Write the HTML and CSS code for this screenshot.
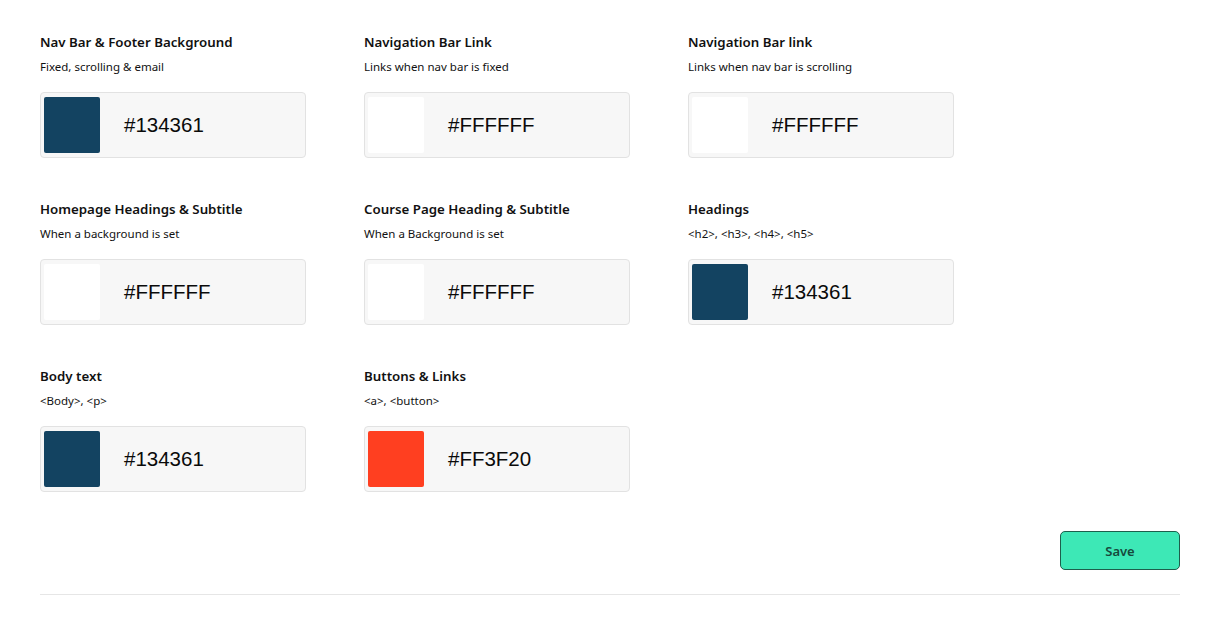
FILE: index.html
```html
<!DOCTYPE html>
<html lang="en">
<head>
  <meta charset="UTF-8" />
  <meta name="viewport" content="width=device-width, initial-scale=1.0"/>
  <title>Colours</title>
  <link rel="stylesheet" href="styles.css">
</head>
<body>
  <div class="page">
    <div class="grid">
      <div class="field">
        <div class="label">Nav Bar &amp; Footer Background</div>
        <div class="hint">Fixed, scrolling &amp; email</div>
        <div class="picker"><span class="swatch navy"></span><span class="hex">#134361</span></div>
      </div>
      <div class="field">
        <div class="label">Navigation Bar Link</div>
        <div class="hint">Links when nav bar is fixed</div>
        <div class="picker"><span class="swatch white"></span><span class="hex">#FFFFFF</span></div>
      </div>
      <div class="field">
        <div class="label">Navigation Bar link</div>
        <div class="hint">Links when nav bar is scrolling</div>
        <div class="picker"><span class="swatch white"></span><span class="hex">#FFFFFF</span></div>
      </div>

      <div class="field">
        <div class="label">Homepage Headings &amp; Subtitle</div>
        <div class="hint">When a background is set</div>
        <div class="picker"><span class="swatch white"></span><span class="hex">#FFFFFF</span></div>
      </div>
      <div class="field">
        <div class="label">Course Page Heading &amp; Subtitle</div>
        <div class="hint">When a Background is set</div>
        <div class="picker"><span class="swatch white"></span><span class="hex">#FFFFFF</span></div>
      </div>
      <div class="field">
        <div class="label">Headings</div>
        <div class="hint">&lt;h2&gt;, &lt;h3&gt;, &lt;h4&gt;, &lt;h5&gt;</div>
        <div class="picker"><span class="swatch navy"></span><span class="hex">#134361</span></div>
      </div>

      <div class="field">
        <div class="label">Body text</div>
        <div class="hint">&lt;Body&gt;, &lt;p&gt;</div>
        <div class="picker"><span class="swatch navy"></span><span class="hex">#134361</span></div>
      </div>
      <div class="field">
        <div class="label">Buttons &amp; Links</div>
        <div class="hint">&lt;a&gt;, &lt;button&gt;</div>
        <div class="picker"><span class="swatch orange"></span><span class="hex">#FF3F20</span></div>
      </div>
    </div>

    <div class="actions">
      <button class="save">Save</button>
    </div>
    <hr class="divider">
  </div>
</body>
</html>
```

FILE: styles.css
```css
body {
  background: #ffffff;
  color: #111111;
  font-family: 'Noto Sans', 'Open Sans', sans-serif;
  margin: 0;
  padding: 0;
}
.page {
  padding: 32px 35px 0 40px;
}
.grid {
  display: grid;
  grid-template-columns: repeat(3, 266px);
  column-gap: 58px;
  row-gap: 41px;
}
.label {
  font-size: 13.3px;
  font-weight: 600;
  line-height: 20px;
}
.hint {
  font-size: 11.5px;
  line-height: 16px;
  margin-top: 7px;
  margin-bottom: 17px;
}
.picker {
  display: flex;
  align-items: center;
  height: 64px;
  padding: 0 3px;
  background: #f7f7f7;
  border: 1px solid #e2e2e2;
  border-radius: 4px;
}
.swatch {
  width: 56px;
  height: 56px;
  border-radius: 2px;
  flex: none;
}
.navy { background: #134361; }
.white { background: #ffffff; }
.orange { background: #ff3f20; }
.hex {
  font-family: 'Liberation Sans', Arial, sans-serif;
  font-size: 20.5px;
  margin-left: 24px;
  color: #0a0a0a;
}
.actions {
  display: flex;
  justify-content: flex-end;
  margin-top: 39px;
}
.save {
  width: 120px;
  height: 39px;
  background: #3de8b6;
  border: 1px solid #1d5f4c;
  border-radius: 5px;
  color: #17493c;
  font-family: 'Noto Sans', sans-serif;
  font-size: 13px;
  font-weight: 600;
}
.divider {
  border: 0;
  border-top: 1px solid #e6e6e6;
  margin: 24px 0 0;
}
```
